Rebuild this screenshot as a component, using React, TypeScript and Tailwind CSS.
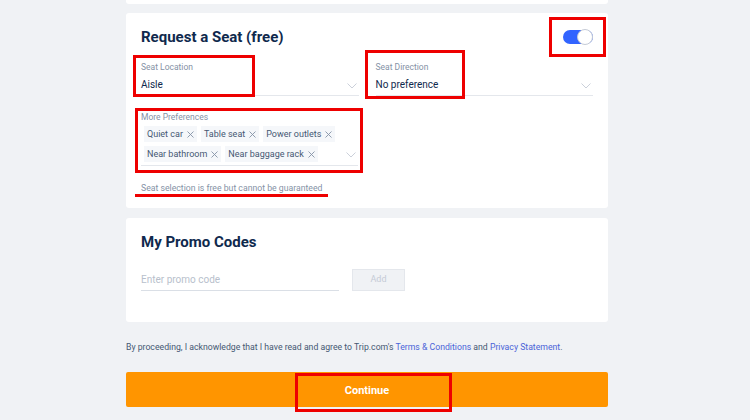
import React from "react";

const Chevron = () => (
  <svg width="10" height="6" viewBox="0 0 10 6" fill="none" className="shrink-0">
    <path d="M0.5 0.5 L5 5 L9.5 0.5" stroke="#c5cbd6" strokeWidth="0.9" />
  </svg>
);

const Chip = ({ label }: { label: string }) => (
  <span className="inline-flex items-center whitespace-nowrap h-[16px] px-[3px] bg-[#f5f7fa] text-[9px] text-[#455873] gap-[4px] leading-none">
    {label}
    <svg width="7" height="7" viewBox="0 0 7 7" className="shrink-0">
      <path d="M0.5 0.5 L6.5 6.5 M6.5 0.5 L0.5 6.5" stroke="#8592a6" strokeWidth="0.9" />
    </svg>
  </span>
);

const RedBox = ({ l, t, w, h }: { l: number; t: number; w: number; h: number }) => (
  <div
    className="absolute border-[3px] border-[#ee0000] pointer-events-none"
    style={{ left: l, top: t, width: w, height: h }}
  />
);

export default function App() {
  return (
    <div
      className="relative w-[750px] h-[420px] overflow-hidden bg-[#f0f2f5]"
      style={{ fontFamily: "Roboto, 'Noto Sans', sans-serif" }}
    >
      <div className="ml-[126px] w-[482px] flex flex-col">
        <div className="h-[4px] bg-white rounded-b-[3px]" />

        {/* Request a Seat */}
        <div className="mt-[9px] h-[195px] bg-white rounded-[3px] px-[15px] pt-[13px]">
          <div className="flex items-center justify-between h-[22px]">
            <h2 className="text-[15px] font-bold text-[#0f294d] leading-[22px]">Request a Seat (free)</h2>
            <div className="w-[30px] h-[14px] rounded-full bg-[#3264ff] relative">
              <div className="absolute right-0 top-[-1px] w-[16px] h-[16px] rounded-full bg-white border border-[#c5cbd6]" />
            </div>
          </div>

          <div className="grid grid-cols-2 gap-x-[17px] mt-[12px]">
            <div className="border-b border-[#e4e7ec]">
              <div className="text-[8.5px] leading-[14px] text-[#8592a6]">Seat Location</div>
              <div className="flex items-center justify-between h-[21px]">
                <span className="text-[10px] text-[#0f294d]">Aisle</span>
                <span className="mr-[2px] mt-[2px]"><Chevron /></span>
              </div>
            </div>
            <div className="border-b border-[#e4e7ec]">
              <div className="text-[8.5px] leading-[14px] text-[#8592a6]">Seat Direction</div>
              <div className="flex items-center justify-between h-[21px]">
                <span className="text-[10px] text-[#0f294d]">No preference</span>
                <span className="mr-[2px] mt-[2px]"><Chevron /></span>
              </div>
            </div>
          </div>

          <div className="w-[217px] mt-[14px] border-b border-[#e4e7ec] pb-[3px]">
            <div className="text-[8.5px] leading-[14px] text-[#8592a6]">More Preferences</div>
            <div className="flex items-end justify-between">
              <div className="flex flex-col gap-[4px] mt-[2px] pl-[3px]">
                <div className="flex gap-[4px]">
                  <Chip label="Quiet car" />
                  <Chip label="Table seat" />
                  <Chip label="Power outlets" />
                </div>
                <div className="flex gap-[4px]">
                  <Chip label="Near bathroom" />
                  <Chip label="Near baggage rack" />
                </div>
              </div>
              <span className="mb-[4px] mr-[2px]"><Chevron /></span>
            </div>
          </div>

          <div className="mt-[15px] text-[8.7px] leading-[14px] text-[#8592a6]">
            Seat selection is free but cannot be guaranteed
          </div>
        </div>

        {/* Promo */}
        <div className="mt-[10px] h-[104px] bg-white rounded-[3px] px-[15px] pt-[13px]">
          <h2 className="text-[15px] font-bold text-[#0f294d] leading-[22px]">My Promo Codes</h2>
          <div className="flex items-end gap-[13px] mt-[16px]">
            <div className="w-[198px] border-b border-[#dadfe6] h-[22px] flex items-center">
              <span className="text-[10px] text-[#b8bfcc]">Enter promo code</span>
            </div>
            <div className="w-[53px] h-[22px] bg-[#f0f2f5] border border-[#e4e7ec] flex items-center justify-center text-[9px] text-[#c5cbd6]">
              Add
            </div>
          </div>
        </div>

        <p className="mt-[19px] text-[8.7px] leading-[12px] text-[#455873] whitespace-nowrap">
          By proceeding, I acknowledge that I have read and agree to Trip.com's{" "}
          <span className="text-[#4b64d8]">Terms &amp; Conditions</span> and{" "}
          <span className="text-[#4b64d8]">Privacy Statement</span>.
        </p>

        <button className="mt-[19px] h-[35px] w-full bg-[#ff9500] rounded-[2px] text-white font-bold text-[11px] pt-[3px]">
          Continue
        </button>
      </div>

      <RedBox l={549} t={17} w={57} h={40} />
      <RedBox l={133} t={55} w={122} h={42} />
      <RedBox l={365} t={50} w={100} h={49} />
      <RedBox l={135} t={108} w={228} h={65} />
      <div className="absolute left-[135px] top-[194px] w-[193px] h-[3px] bg-[#ee0000]" />
      <RedBox l={295} t={373} w={157} h={39} />
    </div>
  );
}
